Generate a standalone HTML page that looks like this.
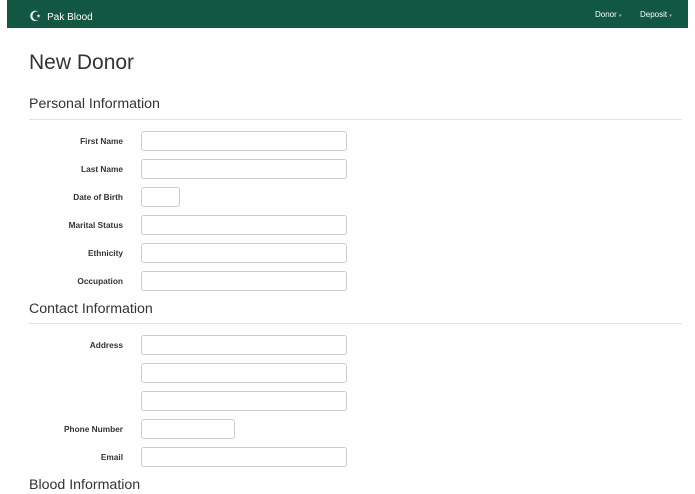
<!DOCTYPE html>
<html><head><style>
body{margin:0;width:695px;height:494px;overflow:hidden;background:#fff;font-family:"Liberation Sans","DejaVu Sans",sans-serif;color:#333;position:relative}
.nav{position:absolute;left:7px;top:0;width:681px;height:28px;background:#115741}
.brand{position:absolute;left:22px;top:7px;color:#fff;font-size:10px}
.nav .m{position:absolute;top:10px;color:#fff;font-size:8px}
h1{position:absolute;left:29px;top:51px;margin:0;font-weight:normal;font-size:21px;color:#333}
.h{position:absolute;left:29px;margin:0;font-weight:normal;font-size:14.2px;color:#333}
.line{position:absolute;left:29px;width:653px;height:1px;background:#e2e2e2}
.l{position:absolute;right:572px;font-size:8.3px;font-weight:bold;color:#333;text-align:right;white-space:nowrap}
.i{position:absolute;left:141px;height:18px;border:1px solid #ccc;border-radius:3px;box-sizing:content-box}
</style></head><body>
<div class="nav">
<div class="brand"><span style="font-size:14px;position:relative;top:1px">☪</span>&nbsp; Pak Blood</div>
<div class="m" style="left:588px">Donor <span style="font-size:5px;opacity:.6">▾</span></div>
<div class="m" style="left:633px">Deposit <span style="font-size:5px;opacity:.6">▾</span></div>
</div>
<h1>New Donor</h1>
<div class="h" style="top:96px">Personal Information</div>
<div class="line" style="top:119px"></div>
<div class="l" style="top:136px">First Name</div><div class="i" style="top:131px;width:204px"></div>
<div class="l" style="top:164px">Last Name</div><div class="i" style="top:159px;width:204px"></div>
<div class="l" style="top:192px">Date of Birth</div><div class="i" style="top:187px;width:37px"></div>
<div class="l" style="top:220px">Marital Status</div><div class="i" style="top:215px;width:204px"></div>
<div class="l" style="top:248px">Ethnicity</div><div class="i" style="top:243px;width:204px"></div>
<div class="l" style="top:276px">Occupation</div><div class="i" style="top:271px;width:204px"></div>
<div class="h" style="top:301px">Contact Information</div>
<div class="line" style="top:323px"></div>
<div class="l" style="top:340px">Address</div><div class="i" style="top:335px;width:204px"></div>
<div class="i" style="top:363px;width:204px"></div>
<div class="i" style="top:391px;width:204px"></div>
<div class="l" style="top:424px">Phone Number</div><div class="i" style="top:419px;width:92px"></div>
<div class="l" style="top:452px">Email</div><div class="i" style="top:447px;width:204px"></div>
<div class="h" style="top:477px">Blood Information</div>
</body></html>
